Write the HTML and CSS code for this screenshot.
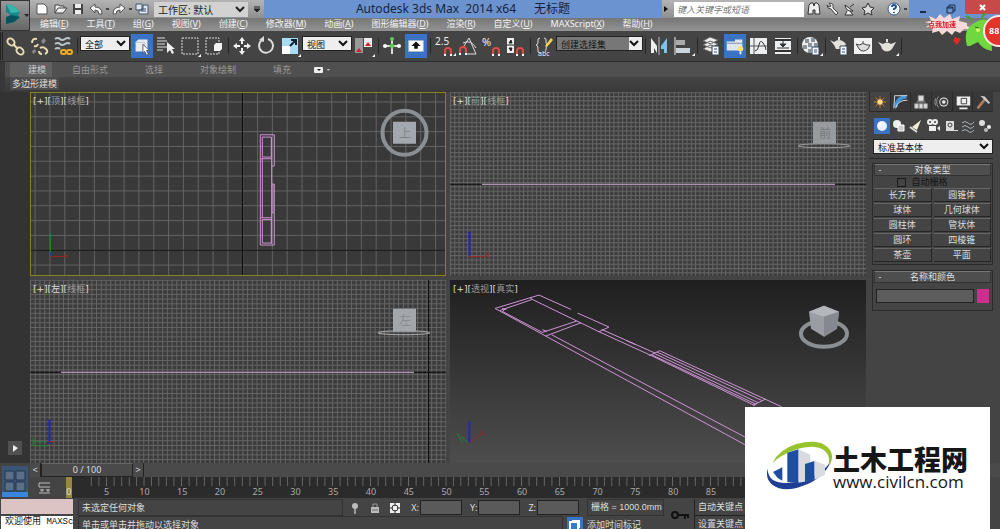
FILE: index.html
```
<!DOCTYPE html>
<html lang="zh-CN">
<head>
    <meta charset="UTF-8">
    <meta name="viewport" content="width=device-width, initial-scale=1.0">
    <title>Autodesk 3ds Max 2014 x64</title>
    <link rel="stylesheet" href="styles.css">
</head>
<body>
    <header class="header">
        <button class="app-btn" aria-label="应用程序">
            <svg width="30" height="30" viewBox="0 0 30 30"><path d="M5 3l8 2 6 6-2 3 2 3-6 4-8 2v-6l5-3-5-3z" fill="#16878a"/><path d="M5 3l8 2 6 6-9 1z" fill="#37b5ad"/><path d="M5 23v-7l5-2 9 2-6 5z" fill="#07545e"/><path d="M23 13h5l-2 3z" fill="#222"/></svg>
        </button>
        <div class="header-rows">
            <div class="titlebar">
                <div class="quick">
                    <button aria-label="新建"><svg width="16" height="14" viewBox="0 0 16 14"><path d="M3 2h7l3 3v7H3z" fill="#fff" stroke="#555"/></svg></button>
                    <button aria-label="打开"><svg width="16" height="14" viewBox="0 0 16 14"><path d="M3 11V3h4l1 1h4v2M3 11l3-5h9l-4 5z" fill="#eee" stroke="#444"/></svg></button>
                    <button aria-label="保存"><svg width="16" height="14" viewBox="0 0 16 14"><path d="M3 2h10v10H3z" fill="#444"/><path d="M5 2h6v4H5zM5 8h6v4H5z" fill="#eee"/></svg></button>
                    <button aria-label="撤消"><svg width="16" height="14" viewBox="0 0 16 14"><path d="M2 6l5-4v3q7 0 7 7h-3q0-4-4-4v3z" fill="#f4f4f4" stroke="#555"/></svg></button>
                    <i class="dot"></i>
                    <button aria-label="重做"><svg width="16" height="14" viewBox="0 0 16 14"><path d="M14 6L9 2v3Q2 5 2 12h3q0-4 4-4v3z" fill="#f4f4f4" stroke="#555"/></svg></button>
                    <i class="dot"></i>
                    <button aria-label="项目文件夹"><svg width="16" height="14" viewBox="0 0 16 14"><path d="M2 2h6v6H2zM9 3h5v9H5V8h4z" fill="#dfe6ee" stroke="#41566f"/><path d="M7 7h5M7 9h5" stroke="#41566f"/></svg></button>
                    <select class="workspace" aria-label="工作区"><option>工作区: 默认</option></select>
                    <svg class="quick-more" width="10" height="12" viewBox="0 0 10 12"><path d="M2 4h6M2 6h6L5 9z" stroke="#222" fill="#222"/></svg>
                </div>
                <h1 class="title"><span>Autodesk 3ds Max&nbsp; 2014 x64</span><span>无标题</span></h1>
                <div class="search">
                    <button class="search-arrow" aria-label="展开"><svg width="8" height="12" viewBox="0 0 8 12"><path d="M2 3l4 3-4 3z" fill="#111"/></svg></button>
                    <input type="text" placeholder="键入关键字或短语" aria-label="搜索">
                    <button aria-label="查找"><svg width="16" height="16" viewBox="0 0 16 16"><path d="M3 4l2-2h2l1 3 1-3h2l2 2 1 9H9V9H7v4H2z" fill="#eee" stroke="#333"/></svg></button>
                    <button aria-label="工具"><svg width="16" height="16" viewBox="0 0 16 16"><path d="M3 4q0 4 4 4l5 6 2-2-5-5q1-5-4-5l2 3-2 1z" fill="#eee" stroke="#444"/></svg></button>
                    <button aria-label="通讯"><svg width="16" height="16" viewBox="0 0 16 16"><path d="M3 4q1 7 8 6zM5 10l-2 4h8l-3-4M8 6l4-3" fill="#eee" stroke="#333"/></svg></button>
                    <button aria-label="收藏夹"><svg width="16" height="16" viewBox="0 0 16 16"><path d="M8 2l2 4 4 1-3 3 1 4-4-2-4 2 1-4-3-3 4-1z" fill="#ddd" stroke="#333"/></svg></button>
                    <button class="help-btn" aria-label="帮助"><svg width="16" height="16" viewBox="0 0 16 16"><circle cx="8" cy="8" r="6" fill="#f6f8fb" stroke="#345a8c"/><path d="M6 6q0-2 2-2t2 2q0 1-2 2v1M8 11v1" fill="none" stroke="#21518f" stroke-width="2"/></svg></button>
                    <i class="dot"></i>
                </div>
                <div class="win-controls">
                    <button aria-label="最小化"><svg width="10" height="12" viewBox="0 0 10 12"><path d="M2 9h6" stroke="#1d2c4a" stroke-width="2"/></svg></button>
                    <button aria-label="还原"><svg width="10" height="12" viewBox="0 0 10 12"><path d="M1 4h6v6H1zM3 4V2h6v6H7" fill="none" stroke="#1d2c4a"/><path d="M1 5h6" stroke="#1d2c4a"/></svg></button>
                    <button class="close-btn" aria-label="关闭"><svg width="10" height="12" viewBox="0 0 10 12"><path d="M2 4l5 5M7 4L2 9" stroke="#fff" stroke-width="2"/></svg></button>
                </div>
            </div>
            <nav class="menu">
                <a href="#">编辑(<u>E</u>)</a>
                <a href="#">工具(<u>T</u>)</a>
                <a href="#">组(<u>G</u>)</a>
                <a href="#">视图(<u>V</u>)</a>
                <a href="#">创建(<u>C</u>)</a>
                <a href="#">修改器(<u>M</u>)</a>
                <a href="#">动画(<u>A</u>)</a>
                <a href="#">图形编辑器(<u>D</u>)</a>
                <a href="#">渲染(<u>R</u>)</a>
                <a href="#">自定义(<u>U</u>)</a>
                <a href="#">MAXScript(<u>X</u>)</a>
                <a href="#">帮助(<u>H</u>)</a>
            </nav>
        </div>
    </header>

    <!-- Main toolbar -->
    <div class="toolbar">
        <i class="grip"></i>
        <button aria-label="链接"><svg viewBox="0 0 24 24"><g fill="none" stroke="#e8dcb4" stroke-width="2"><ellipse cx="8" cy="8" rx="4" ry="3" transform="rotate(45 8 8)"/><ellipse cx="17" cy="17" rx="4" ry="3" transform="rotate(45 17 17)"/><path d="M10 10l5 5"/></g></svg></button>
        <button aria-label="取消链接"><svg viewBox="0 0 24 24"><g fill="none" stroke="#e8dcb4" stroke-width="2"><path d="M10 5q-5-1-5 4M7 12q3 1 4-2M13 14q3-2 6 1t-1 5M12 17q0 3 3 3"/></g><path d="M14 7l3-3 2 3-3 3zM5 17l3-2 1 3-3 2z" fill="#888"/></svg></button>
        <button aria-label="绑定"><svg viewBox="0 0 24 24"><path d="M4 5q3-2 5 0t5 0 5 0M4 10q3-2 5 0t5 0 5 0M4 15q3-2 5 0" fill="none" stroke="#b9c4c9" stroke-width="2"/><g fill="none" stroke="#f0ab21" stroke-width="2"><rect x="10" y="16" width="5" height="4" rx="2"/><rect x="16" y="16" width="5" height="4" rx="2"/></g></svg></button>
        <i class="sep"></i>
        <select class="filter" aria-label="选择过滤器"><option>全部</option></select>
        <button class="on" aria-label="选择对象"><svg viewBox="0 0 24 24"><path d="M5 8l3-3h10v10l-3 3H5z" fill="#e9edf2"/><path d="M5 8h10v9" fill="none" stroke="#b7c0cb"/><path d="M13 10v10l2-2 2 4 2-1-2-4h3z" fill="#fff" stroke="#555"/></svg></button>
        <button aria-label="按名称选择"><svg viewBox="0 0 24 24"><path d="M3 4h8M3 7h10M3 10h8M3 13h10M3 16h6" stroke="#ddd"/><path d="M13 8v11l3-3 2 4 2-1-2-4h3z" fill="#eee"/></svg></button>
        <button aria-label="矩形选择区域"><svg viewBox="0 0 24 24"><path d="M4 4h16v16H4z" fill="none" stroke="#ddd" stroke-dasharray="2 1"/><path d="M23 20v3h-3z" fill="#fff"/></svg></button>
        <button aria-label="窗口/交叉"><svg viewBox="0 0 24 24"><path d="M4 4h13v16H4z" fill="none" stroke="#ddd" stroke-dasharray="2 1"/><path d="M12 11l2-2h6v6l-2 2h-6z" fill="#f2f2f2"/></svg></button>
        <i class="sep"></i>
        <button aria-label="移动"><svg viewBox="0 0 24 24"><path d="M12 3l3 4h-2v3h-2V7H9zM12 21l3-4h-2v-3h-2v3H9zM3 12l4-3v2h3v2H7v2zM21 12l-4-3v2h-3v2h3v2z" fill="#f0f0f0"/></svg></button>
        <button aria-label="旋转"><svg viewBox="0 0 24 24"><path d="M14 5a7 7 0 1 1-6 1" fill="none" stroke="#ddd" stroke-width="2"/><path d="M10 2v6l-5-2z" fill="#ddd"/></svg></button>
        <button aria-label="缩放"><svg viewBox="0 0 24 24"><path d="M4 4h16v16H4z" fill="#a9dcf4"/><path d="M4 12h8v8H4z" fill="#fff"/><path d="M12 12l5-5M13 6h5v5" fill="none" stroke="#123" stroke-width="2"/><path d="M23 20v3h-3z" fill="#fff"/></svg></button>
        <select class="coords" aria-label="参考坐标系"><option>视图</option></select>
        <button aria-label="轴点中心"><svg viewBox="0 0 24 24"><path d="M3 4h8v15H3z" fill="#999"/><path d="M12 4h8v9h-8z" fill="#eee"/><path d="M4 18l3-4 3 4zM13 12l3-4 3 4z" fill="#d3202c"/><path d="M23 20v3h-3z" fill="#fff"/></svg></button>
        <i class="sep"></i>
        <button aria-label="选择并操纵"><svg viewBox="0 0 24 24"><path d="M12 5v15M5 12h14" stroke="#ddd" stroke-width="2"/><circle cx="12" cy="5" r="2" fill="#63c85c"/><circle cx="5" cy="12" r="2" fill="#fff"/><circle cx="19" cy="12" r="2" fill="#fff"/><path d="M12 9l3 3-3 3-3-3z" fill="#63c85c"/></svg></button>
        <button class="on" aria-label="键盘快捷键覆盖"><svg viewBox="0 0 24 24"><path d="M4 6h16v12H4z" fill="#fff" stroke="#adb6c5"/><path d="M12 7l5 5h-3v3h-4v-3H7z" fill="#111"/></svg></button>
        <i class="sep"></i>
        <button aria-label="捕捉开关"><svg viewBox="0 0 24 24"><text x="3" y="11" font-size="10" fill="#eee">2.5</text><path d="M13 20v-3q0-3 3-3t3 3v3" fill="none" stroke="#e04a42" stroke-width="2"/><path d="M12 20h2v2h-2zM18 20h2v2h-2zM24 19v3h-3z" fill="#fff"/></svg></button>
        <button aria-label="角度捕捉"><svg viewBox="0 0 24 24"><path d="M8 12l5-8 7 16H11M7 9q8-4 13 5" fill="none" stroke="#ddd"/><path d="M4 19v-3q0-3 3-3t3 3v3" fill="none" stroke="#e04a42" stroke-width="2"/><path d="M3 19h2v2H3zM9 19h2v2H9z" fill="#fff"/></svg></button>
        <button aria-label="百分比捕捉"><svg viewBox="0 0 24 24"><text x="2" y="12" font-size="11" fill="#eee">%</text><path d="M13 20v-3q0-3 3-3t3 3v3" fill="none" stroke="#e04a42" stroke-width="2"/><path d="M12 20h2v2h-2zM18 20h2v2h-2z" fill="#fff"/></svg></button>
        <button aria-label="微调器捕捉"><svg viewBox="0 0 24 24"><path d="M3 4h7v15H3z" fill="#eee"/><path d="M5 9l2-3 1 3zM5 14l2 3 1-3zM3 11h7" fill="#222" stroke="#222"/><path d="M13 20v-3q0-3 3-3t3 3v3" fill="none" stroke="#e04a42" stroke-width="2"/><path d="M12 20h2v2h-2zM18 20h2v2h-2z" fill="#fff"/></svg></button>
        <i class="sep"></i>
        <button aria-label="编辑命名选择集"><svg viewBox="0 0 24 24"><path d="M8 4q-3 0-2 4 0 3-2 3 2 0 2 4-1 4 2 4M12 4q3 0 2 4 0 3 2 3-2 0-2 4 0 2-1 3" fill="none" stroke="#ddd"/><text x="6" y="22" font-size="7" fill="#eee">abc</text><path d="M13 12l6-8 2 2-6 7z" fill="#f6d04e"/></svg></button>
        <select class="named" aria-label="命名选择集"><option>创建选择集</option></select>
        <i class="sep"></i>
        <button aria-label="镜像"><svg viewBox="0 0 24 24"><path d="M4 4l6 8v7l-3-5v5H4z" fill="#eee"/><path d="M12 3v18" stroke="#bbb"/><path d="M20 4l-6 8v3h3v4h3z" fill="#7cc4ea"/></svg></button>
        <button aria-label="对齐"><svg viewBox="0 0 24 24"><path d="M4 3v18" stroke="#eee"/><path d="M5 6h9v5H5z" fill="#aaa"/><path d="M5 14h14v5H5z" fill="#c9d4dd"/><path d="M24 19v3h-3z" fill="#fff"/></svg></button>
        <i class="sep"></i>
        <button aria-label="层管理器"><svg viewBox="0 0 24 24"><path d="M4 15l7-4 8 3-7 4zM4 11l7-4 8 3-7 4zM4 7l7-4 8 3-7 4z" fill="#eee" stroke="#666"/><path d="M13 12h7v9h-7z" fill="#f5f9ff" stroke="#345"/><path d="M15 15h3M15 18h3" stroke="#357"/></svg></button>
        <button class="on" aria-label="切换功能区"><svg viewBox="0 0 24 24"><path d="M3 7h9V5h8v12H3z" fill="#dfe5ec"/><path d="M3 9h17" stroke="#7b8ba0"/><circle cx="18" cy="15" r="3" fill="#ffe36a"/><path d="M17 18h2v3h-2z" fill="#eee"/></svg></button>
        <button aria-label="曲线编辑器"><svg viewBox="0 0 24 24"><path d="M3 4h17v16H3z" fill="#eceeef"/><path d="M7 4v16M3 12h17" stroke="#555"/><path d="M8 17q3 0 4-6t4-2 3 7" fill="none" stroke="#333"/></svg></button>
        <button aria-label="图解视图"><svg viewBox="0 0 24 24"><path d="M4 4h16v16H4z" fill="#eceeef"/><path d="M4 6h16M4 17h16" stroke="#333" stroke-width="2"/><path d="M12 7v4M9 10h6l-3 3zM6 14h12" stroke="#333" fill="#333"/></svg></button>
        <i class="sep"></i>
        <button aria-label="材质编辑器"><svg viewBox="0 0 24 24"><circle cx="11" cy="11" r="8" fill="#eee"/><path d="M6 5h4v4H6zM12 4h4v4h-4zM9 9h4v4H9zM15 9h4v4h-4zM4 11h4v4H4zM9 15h3v4H9z" fill="#89939c"/><path d="M13 13h7v8h-7z" fill="#f5f9ff" stroke="#345"/><path d="M15 16h3M15 18h3" stroke="#357"/><path d="M24 19v3h-3z" fill="#fff"/></svg></button>
        <i class="sep"></i>
        <button aria-label="渲染设置"><svg viewBox="0 0 24 24"><path d="M3 6l4 2q5-4 10 0l2 2-3 5H9L7 11zM11 3h2v3h-2z" fill="#e4e0da"/><path d="M13 12h7v9h-7z" fill="#f5f9ff" stroke="#345"/><path d="M15 15h3M15 18h3" stroke="#357"/></svg></button>
        <button aria-label="渲染帧窗口"><svg viewBox="0 0 24 24"><path d="M3 4h18v16H3z" fill="#f1f1f1"/><path d="M5 10l3 1q4-3 8 0h3l-2 4q-5 4-9 0l-1-2zM12 7v2" fill="#ddd" stroke="#444"/></svg></button>
        <button aria-label="渲染产品"><svg viewBox="0 0 24 24"><path d="M3 8l5 2q4-3 8 0l5-2-4 7q-5 5-10 0l-1-3zM11 5h2v3h-2z" fill="#e4e0da"/><path d="M24 19v3h-3z" fill="#fff"/></svg></button>
        <i class="sep"></i>
    </div>

    <!-- Modeling ribbon -->
    <div class="ribbon">
        <div class="ribbon-tabs">
            <button class="active">建模</button>
            <button>自由形式</button>
            <button>选择</button>
            <button>对象绘制</button>
            <button>填充</button>
            <button aria-label="最小化功能区"><svg width="18" height="8" viewBox="0 0 18 8"><rect width="9" height="6" y="1" rx="1" fill="#eee"/><path d="M3 3h4L5 5z" fill="#222"/><path d="M13 3h3l-2 2z" fill="#ccc"/></svg></button>
        </div>
        <div class="ribbon-panel"><span>多边形建模</span></div>
    </div>

    <main class="main">
        <div class="rail"><button aria-label="展开视口布局"><svg width="14" height="14" viewBox="0 0 14 14"><path d="M5 4l5 3-5 4z" fill="#eee"/></svg></button></div>

        <div class="viewports">
            <section class="viewport active">
                <p class="vp-label">[+][<span>顶</span>][<span>线框</span>]</p>
                <svg viewBox="0 0 416 184" preserveAspectRatio="xMidYMid slice">
                    <defs><pattern id="grid-top" width="14.83" height="14.83" x="4.6" y="9.7" patternUnits="userSpaceOnUse"><path d="M.5 0v15M0 .5h15" stroke="#626262"/></pattern></defs>
                    <rect width="416" height="184" fill="url(#grid-top)"/>
                    <path d="M212.500 0v184M0 158.500h416" stroke="#0c0c0c"/>
                    <g transform="translate(0 -2) scale(.3333)" fill="none" stroke="#cf93d6" stroke-width="3">
                        <path d="M691 135h42v94h-8M691 135v331h42V370M697 142h27v60h-27zM691 207h34M697 207v177M725 142v320M691 384h34M697 389h27v71h-27zM725 283h8v86h-8M729 283v86"/>
                        <path d="M61 430v60" stroke="#1e8c28"/><path d="M61 500h45l10-8m0 14l-10-10" stroke="#a32020"/><path d="M61 486v12" stroke="#2c3cb0"/>
                    </g>
                    <circle cx="374.500" cy="41" r="22" fill="none" stroke="#8b8f93" stroke-width="4"/>
                    <rect x="363" y="30" width="23" height="22" fill="#a3a8ae"/>
                    <text x="369" y="46" font-size="12" fill="#7e8489">上</text>
                </svg>
            </section>

            <section class="viewport">
                <p class="vp-label">[+][<span>前</span>][<span>线框</span>]</p>
                <svg viewBox="0 0 416 184" preserveAspectRatio="xMidYMid slice">
                    <defs><pattern id="grid-front" width="4.3" height="4.3" patternUnits="userSpaceOnUse"><path d="M.5 0v5M0 .5h5" stroke="#656565"/></pattern></defs>
                    <rect width="416" height="184" fill="url(#grid-front)"/>
                    <path d="M0 92.500h416" stroke="#0c0c0c"/><path d="M32 92.500h353" stroke="#e0b8e6"/>
                    <path d="M19.500 140v24" stroke="#2526b4" stroke-width="2"/><path d="M19 165h15l4-4v6" stroke="#a32626" fill="none"/>
                    <text x="17" y="145" font-size="8" fill="#2526b4">z</text>
                    <ellipse cx="374" cy="54" rx="26" ry="2" fill="none" stroke="#a0a0a0"/>
                    <rect x="363" y="30" width="23" height="22" fill="#979b9d"/>
                    <text x="369" y="46" font-size="12" fill="#73787b">前</text>
                </svg>
            </section>

            <section class="viewport">
                <p class="vp-label">[+][<span class="bright">左</span>][<span>线框</span>]</p>
                <svg viewBox="0 0 416 184" preserveAspectRatio="xMidYMid slice">
                    <defs><pattern id="grid-left" width="4.72" height="4.72" patternUnits="userSpaceOnUse"><path d="M.5 0v5M0 .5h5" stroke="#656565"/></pattern></defs>
                    <rect width="416" height="184" fill="url(#grid-left)"/>
                    <path d="M398.500 0v184M0 92.500h416" stroke="#0c0c0c"/><path d="M31 92.500h353" stroke="#e0b8e6"/>
                    <path d="M19.500 140v24" stroke="#2526b4" stroke-width="2"/><path d="M3 158v8h16M3 162h14" stroke="#218530" fill="none"/><path d="M19 162h5" stroke="#a32626"/>
                    <text x="17" y="145" font-size="8" fill="#2526b4">z</text>
                    <ellipse cx="374" cy="53" rx="26" ry="2" fill="none" stroke="#b0b0b0"/>
                    <rect x="363" y="29" width="23" height="23" fill="#a3a7ac"/>
                    <text x="369" y="45" font-size="12" fill="#858b94">左</text>
                </svg>
            </section>

            <section class="viewport shaded">
                <p class="vp-label">[+][<span>透视</span>][<span>真实</span>]</p>
                <svg viewBox="0 0 416 184" preserveAspectRatio="xMidYMid slice">
                    <g transform="translate(-5 -5) scale(.3333)" fill="none" stroke="#cf93d6" stroke-width="3">
                        <path d="M378 104L282 61 150 101 302 184 900 510M165 107L262 74 462 171 492 157 398 115M262 74l-7-5M184 100l-12 10L292 173 395 139M172 101l12 3M292 165l14 5M302 184L408 144M320 180L900 487M462 171L620 243 930 393M470 164L630 235M545 198l28 12M612 243L644 228 1010 396M636 232L950 377M628 236L940 384M620 240L934 389M925 391L962 373"/>
                        <path d="M73 440v65" stroke="#2526b4" stroke-width="6"/><path d="M73 505l40-30m-6-6l14 12" stroke="#952525"/><path d="M70 505l-22-20m-12-10l15 26" stroke="#218530"/>
                    </g>
                    <ellipse cx="374" cy="54" rx="23" ry="13" fill="none" stroke="#8d9093" stroke-width="4"/>
                    <path d="M359 32l15-6 15 6-2 17-13 8-13-8z" fill="#9a9ea3"/><path d="M359 32l15 5 15-5-15-6z" fill="#b3b6ba"/><path d="M374 37v20l13-8 2-17z" fill="#85898f"/>
                </svg>
            </section>
        </div>

        <!-- Command panel -->
        <aside class="panel">
            <div class="panel-tabs">
                <button class="active" aria-label="创建"><svg viewBox="0 0 20 20"><path d="M10 3v14M3 10h14M5 5l10 10M15 5L5 15" stroke="#d07a20"/><circle cx="10" cy="10" r="3" fill="#ffd981"/></svg></button>
                <button aria-label="修改"><svg viewBox="0 0 20 20"><path d="M4 16Q5 5 16 4" fill="none" stroke="#3f95d8" stroke-width="4"/><path d="M2 17L3 3h14M4 17q2-9 13-9" fill="none" stroke="#e4e4e4"/></svg></button>
                <button aria-label="层次"><svg viewBox="0 0 20 20"><path d="M7 3h6v6H7zM3 12h4v5H3zM8 12h4v5H8zM13 12h4v5h-4zM5 10h10" fill="#ddd" stroke="#999"/></svg></button>
                <button aria-label="运动"><svg viewBox="0 0 20 20"><circle cx="12" cy="10" r="5" fill="#eee"/><circle cx="12" cy="10" r="3" fill="none" stroke="#444" stroke-width="2"/><path d="M6 4q-4 6 0 12M3 6q-2 4 0 8" fill="none" stroke="#999"/></svg></button>
                <button aria-label="显示"><svg viewBox="0 0 20 20"><path d="M3 4h15v10H3zM6 16h9v2H6z" fill="#eee"/><path d="M8 6h6v6H8z" fill="#eee" stroke="#333"/></svg></button>
                <button aria-label="实用程序"><svg viewBox="0 0 20 20"><path d="M4 17l8-10" stroke="#b27a5c" stroke-width="3"/><path d="M7 3l5 1 6 7-2 1-5-5z" fill="#ccc"/></svg></button>
            </div>
            <div class="categories">
                <button class="on" aria-label="几何体"><svg viewBox="0 0 16 16"><circle cx="8" cy="8" r="5" fill="#e8f3ff"/><circle cx="6" cy="6" r="2" fill="#fff"/></svg></button>
                <button aria-label="图形"><svg viewBox="0 0 16 16"><circle cx="6" cy="6" r="4" fill="#eee"/><path d="M7 7h6v6H7z" fill="#ccc" stroke="#fff"/></svg></button>
                <button aria-label="灯光"><svg viewBox="0 0 16 16"><path d="M13 2L9 12 4 9z" fill="#f2efd6"/><path d="M2 9l7 5" stroke="#ddd" stroke-width="2"/></svg></button>
                <button aria-label="摄影机"><svg viewBox="0 0 16 16"><circle cx="5" cy="4" r="2" fill="none" stroke="#eee" stroke-width="2"/><circle cx="10" cy="4" r="2" fill="none" stroke="#eee" stroke-width="2"/><path d="M4 8h7v5H4zM12 10l3-2v5z" fill="#eee"/></svg></button>
                <button aria-label="辅助对象"><svg viewBox="0 0 16 16"><path d="M3 3h8v9h4v1H3z" fill="#ddd"/><circle cx="7" cy="7" r="2" fill="#ddd" stroke="#444"/></svg></button>
                <button aria-label="空间扭曲"><svg viewBox="0 0 16 16"><path d="M2 5q3-3 6 0t6-1M2 9q3-3 6 0t6-1M2 13q3-3 6 0t6-1" fill="none" stroke="#a9b7c0"/></svg></button>
                <button aria-label="系统"><svg viewBox="0 0 16 16"><circle cx="5" cy="5" r="3" fill="#ddd"/><circle cx="12" cy="9" r="2" fill="#eee"/><circle cx="9" cy="12" r="2" fill="#bbb"/></svg></button>
            </div>
            <select class="primitive" aria-label="基本体类别"><option>标准基本体</option></select>
            <div class="rollouts">
                <section class="rollout">
                    <h2><span>-</span>对象类型</h2>
                    <label class="autogrid"><input type="checkbox">自动栅格</label>
                    <div class="objects">
                        <button>长方体</button><button>圆锥体</button>
                        <button>球体</button><button>几何球体</button>
                        <button>圆柱体</button><button>管状体</button>
                        <button>圆环</button><button>四棱锥</button>
                        <button>茶壶</button><button>平面</button>
                    </div>
                </section>
                <section class="rollout">
                    <h2><span>-</span>名称和颜色</h2>
                    <div class="name-row">
                        <input type="text" aria-label="名称">
                        <button aria-label="对象颜色"></button>
                    </div>
                </section>
            </div>
        </aside>
    </main>

    <div class="time">
        <button class="layout-tab" aria-label="视口布局"><svg width="26" height="31" viewBox="0 0 26 31"><path d="M0 0h26v31H0z" fill="#395678"/><path d="M0 26h26v5H0z" fill="#3c83dc"/><path d="M3 5h9v9H3zM14 5h9v9h-9zM3 16h9v9H3zM14 16h9v9h-9z" fill="#5a6f88" stroke="#25364b"/></svg></button>
        <div class="time-rows">
            <div class="slider">
                <button aria-label="上一帧">&lt;</button>
                <button class="frame">0 / 100</button>
                <button aria-label="下一帧">&gt;</button>
            </div>
            <div class="trackbar">
                <button class="mini-curve" aria-label="打开迷你曲线编辑器"><svg width="14" height="14" viewBox="0 0 14 14"><path d="M1 2h12v4H1zM1 12h12M4 11V8M10 11V8M2 9h4M8 9h4" fill="none" stroke="#bbb"/></svg></button>
                <ol class="ruler">
                    <li class="now">0</li><li>5</li><li>10</li><li>15</li><li>20</li><li>25</li><li>30</li>
                    <li>35</li><li>40</li><li>45</li><li>50</li><li>55</li><li>60</li><li>65</li>
                    <li>70</li><li>75</li><li>80</li><li>85</li><li></li><li></li><li></li>
                </ol>
            </div>
        </div>
    </div>

    <footer class="status">
        <div class="listener"><div class="macro"></div><div class="echo">欢迎使用 MAXSc</div></div>
        <div class="status-rows">
            <div class="status-row">
                <output class="selection">未选定任何对象</output>
                <button aria-label="孤立当前选择"><svg viewBox="0 0 16 16"><circle cx="8" cy="6" r="3" fill="#bbb"/><path d="M7 9h2v5H7z" fill="#999"/></svg></button>
                <button aria-label="锁定选择"><svg viewBox="0 0 16 16"><path d="M4 7h8v6H4z" fill="#bbb"/><path d="M6 7V4h4v3" fill="none" stroke="#999"/><path d="M5 10h6" stroke="#666"/></svg></button>
                <button aria-label="绝对模式变换输入"><svg viewBox="0 0 16 16"><path d="M3 3h10v10H3z" fill="#eee"/><circle cx="8" cy="8" r="3" fill="none" stroke="#333"/><path d="M8 3v3M8 10v3M3 8h3M10 8h3" stroke="#333"/></svg></button>
                <label>X:<input type="text"></label>
                <label>Y:<input type="text"></label>
                <label>Z:<input type="text"></label>
                <output class="grid-size">栅格 = 1000.0mm</output>
            </div>
            <div class="status-row">
                <p class="prompt">单击或单击并拖动以选择对象</p>
                <button class="on" aria-label="自适应降级"><svg viewBox="0 0 16 16"><path d="M5 3h8v8H5z" fill="#fff"/><path d="M3 5h8v8H3z" fill="#3a78c8" stroke="#fff" stroke-width="2"/></svg></button>
                <button class="tag">添加时间标记</button>
            </div>
        </div>
        <svg class="key" width="20" height="12" viewBox="0 0 20 12"><circle cx="5" cy="6" r="3" fill="none" stroke="#111" stroke-width="2"/><path d="M8 6h11M15 6v4M18 6v3" stroke="#111" stroke-width="2"/></svg>
        <div class="keys"><button>自动关键点</button><button>设置关键点</button></div>
    </footer>

    <div class="brand">
        <svg width="66" height="56" viewBox="80 120 198 168"><path d="M82 206q-8 30 14 48 34 25 90 4 66-22 88-79-26 44-88 63-60 15-88-2-16-12-16-34z" fill="#203f94"/><path d="M96 190q20-42 72-58 56-14 84 2 32 20 20 52-4 8-8 10 8-30-14-46-30-18-82-2-50 18-72 42z" fill="#97c32d"/><path d="M174 148l36 16v78l-36 6zM222 182l32 12v30l-32 16z" fill="#d9dbdf"/><path d="M141 158l33-10v102l-33-4zM194 192l28-9v57l-28 8zM98 216l28-14v40l-14-8z" fill="#1f4ea1"/></svg>
        <div class="brand-text"><strong>土木工程网</strong><span>www.civilcn.com</span></div>
    </div>

    <div class="booster">
        <svg width="78" height="44" viewBox="0 0 78 44">
            <path d="M3 9l6-1-2-5 7 3 4-5 4 4 6-4 2 5 8-3-1 5 8 2 0 3 8 4-11-1-4 4-5-2-3 4-5-4-5 4-3-4-7 2 1-5-7-1 5-3z" fill="#f9d9d9"/>
            <text x="6" y="14" font-size="7" font-weight="bold" fill="#cf1f28">点我加速</text>
            <path d="M44 28q-2-14 12-20 8-4 12 2l2 28q-10-2-14-9l-8 4-3 0z" fill="#6fd83e"/><path d="M50 8q-4-6-6-4M60 6q0-5 4-5" stroke="#4a9c2c" fill="none" stroke-width="2"/><circle cx="56" cy="17" r="2" fill="#d8f36c"/><path d="M53 14l4 1M62 13l4-2" stroke="#287018"/>
            <path d="M33 24l6 2-4 6-4-4z" fill="#de2a1f"/>
            <circle cx="77" cy="18" r="15" fill="#e2342b" stroke="#f8e6e4" stroke-width="2"/><text x="67" y="21" font-size="9" font-weight="bold" fill="#fff">88</text>
        </svg>
    </div>
</body>
</html>
```
FILE: styles.css
```
* {
    box-sizing: border-box;
}

body {
    display: flex;
    flex-direction: column;
    height: 100vh;
    margin: 0;
    overflow: hidden;
    background-color: #444;
    color: #ddd;
    font-family: "Noto Sans", "Noto Sans CJK SC", sans-serif;
    font-size: 9px;
    line-height: 12px;
}

button, input, select {
    margin: 0;
    padding: 0;
    border: none;
    background: none;
    color: inherit;
    font: inherit;
}

h1, h2, p, ol {
    margin: 0;
    padding: 0;
    font-weight: normal;
}

svg {
    display: block;
}

.on {
    background-color: #3b73c4;
}

.dot {
    width: 3px;
    height: 2px;
    background: #444;
}

/* Header */
.header {
    display: flex;
    height: 31px;
    flex: none;
}

.app-btn {
    width: 30px;
    background: linear-gradient(#999, #666);
    border: 1px solid #333;
}

.header-rows {
    flex: 1;
    min-width: 0;
}

.titlebar {
    display: flex;
    height: 18px;
    background: #6b93cf;
}

.quick, .search {
    display: flex;
    align-items: center;
    background: linear-gradient(#b4b4b4, #8f8f8f);
}

.quick {
    gap: 2px;
    width: 234px;
    padding-left: 4px;
}

.workspace {
    flex: 1;
    height: 15px;
    margin-left: 2px;
    background: #d2d2d2;
    color: #222;
    font-size: 10px;
}

.quick-more {
    margin: 0 2px;
}

.title {
    display: flex;
    flex: 1;
    justify-content: center;
    gap: 18px;
    color: #16233c;
    font-size: 12px;
    line-height: 18px;
    white-space: nowrap;
}

.search {
    gap: 2px;
    width: 247px;
    padding-right: 2px;
}

.search-arrow {
    width: 10px;
}

.search input {
    flex: 1;
    width: 120px;
    height: 15px;
    padding-left: 3px;
    background: #fff;
    font-size: 9px;
    font-style: italic;
}

.search input::placeholder {
    color: #777;
}

.help-btn {
    margin-left: 8px;
}

.win-controls {
    display: flex;
    width: 91px;
    justify-content: flex-end;
}

.win-controls button {
    display: grid;
    flex: 1;
    place-items: center;
}

.win-controls .close-btn {
    flex: none;
    width: 35px;
    height: 14px;
    background: #c8494a;
}

.menu {
    display: flex;
    gap: 18px;
    height: 13px;
    padding-left: 10px;
    background: linear-gradient(#777, #929292);
    white-space: nowrap;
}

.menu a {
    color: #f2f2f2;
    text-decoration: none;
}

/* Main toolbar */
.toolbar {
    display: flex;
    flex: none;
    align-items: center;
    height: 31px;
    border-bottom: 1px solid #2e2e2e;
    background: #444;
}

.toolbar button {
    flex: none;
    width: 24px;
    height: 24px;
}

.toolbar button.on {
    width: 22px;
    margin: 0 1px;
}

.toolbar button svg {
    width: 100%;
}

.grip {
    flex: none;
    width: 3px;
    height: 28px;
    border-left: 1px solid #222;
    border-right: 1px solid #222;
}

.sep {
    flex: none;
    width: 1px;
    height: 16px;
    margin: 0 1px 0 2px;
    background: #262626;
}

.toolbar select {
    height: 15px;
    align-self: flex-start;
    margin-top: 5px;
    border: 1px solid #222;
    background: #eee;
    color: #111;
    line-height: 13px;
}

.toolbar .filter, .toolbar .coords {
    width: 50px;
}

.toolbar .filter {
    margin-left: 1px;
}

.toolbar .named {
    width: 87px;
    background: linear-gradient(to right, #777 72px, #eee 72px);
}

/* Ribbon */
.ribbon {
    flex: none;
    height: 30px;
    border-left: 5px solid #383838;
}

.ribbon-tabs {
    display: flex;
    gap: 37px;
    height: 15px;
    padding-left: 5px;
    background: #505050;
}

.ribbon-tabs button {
    color: #999;
}

.ribbon-tabs .active {
    width: 42px;
    margin-right: -17px;
    padding-left: 12px;
    background: #606060;
    color: #ccc;
}

.ribbon-tabs button:last-child {
    margin-left: -14px;
}

.ribbon-panel {
    padding: 1px 0 2px 5px;
    background: linear-gradient(#444, #3a3a3a);
}

.ribbon-panel span {
    padding: 0 2px;
    background: #4c4c4c;
}

/* Work area */
.main {
    display: flex;
    flex: 1;
    min-height: 0;
}

.rail {
    display: flex;
    flex: none;
    align-items: flex-end;
    width: 30px;
    padding: 8px;
    background: #333;
}

.rail button {
    background: #505050;
}

.viewports {
    display: grid;
    flex: 1;
    grid-template-columns: 1fr 1fr;
    grid-template-rows: 1fr 1fr;
    gap: 4px;
    min-width: 0;
}

.viewport {
    position: relative;
    min-height: 0;
    overflow: hidden;
    background: #3c3c3c;
}

.viewport.active {
    outline: 1px solid #8b8122;
    outline-offset: -1px;
    background: #393939;
}

.viewport.shaded {
    background: linear-gradient(#1f1f1f, #4d4d4d);
}

.viewport svg {
    width: 100%;
    height: 100%;
}

.vp-label {
    position: absolute;
    top: 3px;
    left: 3px;
    z-index: 1;
    color: #ddd;
    font-family: "DejaVu Sans", "Noto Sans CJK SC", sans-serif;
}

.vp-label span {
    color: #999;
}

.vp-label .bright {
    color: #ddd;
}

/* Command panel */
.panel {
    flex: none;
    width: 134px;
    padding: 0 7px 0 3px;
    background: #444;
}

.panel-tabs {
    display: flex;
    height: 20px;
    border-bottom: 1px solid #2a2a2a;
}

.panel-tabs button {
    flex: 1;
    border-left: 1px solid #2a2a2a;
    background: #383838;
}

.panel-tabs .active {
    background: #444;
}

.panel-tabs svg {
    width: 18px;
    height: 18px;
    margin: auto;
}

.categories {
    display: flex;
    justify-content: space-between;
    padding: 6px 0 5px 5px;
}

.categories svg {
    width: 16px;
    height: 16px;
}

.primitive {
    width: 120px;
    height: 15px;
    margin-left: 4px;
    border: 1px solid #222;
    background: #eee;
    color: #111;
}

.rollouts {
    display: flex;
    flex-direction: column;
    gap: 5px;
    margin-top: 4px;
    padding: 4px 0 0 3px;
    border-top: 1px solid #2a2a2a;
}

.rollout {
    padding: 0 1px 2px;
    border: 1px solid #2c2c2c;
}

.rollout h2 {
    display: grid;
    grid-template-columns: 10px 1fr 10px;
    border: 1px solid #333;
    border-top-color: #777;
    background: #4e4e4e;
    font-size: 9px;
    line-height: 10px;
    text-align: center;
}

.autogrid {
    display: flex;
    align-items: center;
    justify-content: center;
    gap: 5px;
    padding: 0 20px 0 0;
    color: #151515;
}

.autogrid input {
    width: 9px;
    height: 9px;
    appearance: none;
    border: 1px solid #1c1c1c;
}

.objects {
    display: grid;
    grid-template-columns: 1fr 1fr;
    gap: 1px 2px;
}

.objects button {
    height: 14px;
    border-top: 1px solid #666;
    border-bottom: 1px solid #252525;
    border-right: 1px solid #252525;
    line-height: 12px;
}

.name-row {
    display: flex;
    gap: 3px;
    padding: 6px 2px 5px;
}

.name-row input {
    flex: 1;
    min-width: 0;
    height: 14px;
    border: 1px solid #222;
    background: #5c5c5c;
}

.name-row button {
    width: 12px;
    background: #c8308c;
}

/* Time slider and track bar */
.time {
    display: flex;
    flex: none;
    height: 36px;
}

.layout-tab {
    flex: none;
    width: 30px;
    padding: 0 2px;
}

.time-rows {
    flex: 1;
    min-width: 0;
}

.slider {
    display: flex;
    height: 14px;
    background: #4a4a4a;
}

.slider button {
    width: 11px;
    border-right: 1px solid #222;
}

.slider .frame {
    width: 92px;
    border: 1px solid #222;
    border-top-color: #666;
}

.trackbar {
    display: flex;
    height: 21px;
    padding-right: 157px;
}

.mini-curve {
    flex: none;
    width: 20px;
    padding-left: 8px;
    overflow: visible;
}

.ruler {
    display: flex;
    flex: 1;
    list-style: none;
}

.ruler li {
    flex: 1;
    padding-top: 9px;
    background: linear-gradient(to right, transparent 3px, #686868 3px, #686868 4px, transparent 4px) 0 0 / 20% 9px repeat-x #2b2b2b;
    color: #aaa;
    text-align: center;
}

.ruler .now {
    background: linear-gradient(to right, #444 42%, #96893a 42%, #96893a 58%, #2b2b2b 58%);
    color: #ddd;
}

/* Status bar */
.status {
    display: flex;
    flex: none;
    height: 30px;
}

.listener {
    flex: none;
    width: 72px;
    margin-left: 1px;
}

.macro {
    height: 15px;
    margin-bottom: 2px;
    background: #ddc4c4;
}

.echo {
    height: 14px;
    padding-left: 4px;
    overflow: hidden;
    background: #fff;
    color: #111;
    font-family: "Liberation Mono", "Noto Sans CJK SC", monospace;
    white-space: nowrap;
}

.status-rows {
    width: 586px;
    margin: 0 3px 0 5px;
}

.status-row {
    display: flex;
    gap: 4px;
    align-items: center;
    height: 17px;
}

.status-row svg {
    width: 16px;
    height: 16px;
}

.selection, .prompt, .grid-size {
    padding-left: 3px;
    border: 1px solid #333;
    line-height: 15px;
    white-space: nowrap;
}

.selection, .prompt {
    flex: 1;
}

.status-row label {
    display: flex;
    align-items: center;
    gap: 1px;
    margin-left: 4px;
}

.status-row label input {
    width: 42px;
    height: 15px;
    border: 1px solid #222;
    background: #5a5a5a;
}

.grid-size, .tag {
    width: 77px;
    margin-left: 4px;
}

.grid-size {
    font-family: "Liberation Sans", "Noto Sans CJK SC", sans-serif;
}

.tag {
    margin-left: 0;
    text-align: left;
}

.key {
    margin: 10px 4px 0 3px;
}

.keys {
    display: grid;
    grid-template-rows: 17px 17px;
}

.keys button {
    padding: 0 3px;
    border-bottom: 1px solid #222;
    border-left: 1px solid #222;
}

/* Overlays */
.brand {
    position: fixed;
    right: 10px;
    bottom: 0;
    display: flex;
    align-items: center;
    justify-content: center;
    width: 245px;
    height: 122px;
    background: #fff;
    color: #161616;
}

.brand-text {
    display: flex;
    flex-direction: column;
}

.brand-text strong {
    font-size: 27px;
    font-weight: 900;
    line-height: 27px;
}

.brand-text span {
    font-family: "Open Sans", sans-serif;
    font-size: 17px;
    font-weight: 500;
    line-height: 17px;
}

.booster {
    position: fixed;
    top: 13px;
    right: 0;
}
```
